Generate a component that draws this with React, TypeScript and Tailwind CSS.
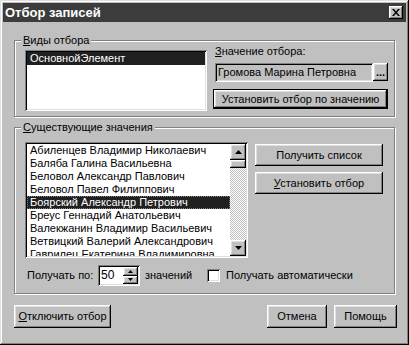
import React from 'react';

const raised =
  'bg-[#c0c0c0] shadow-[inset_-1px_-1px_#000,inset_1px_1px_#fff,inset_-2px_-2px_#808080,inset_2px_2px_#dfdfdf]';
const sunken =
  'shadow-[inset_1px_1px_#808080,inset_-1px_-1px_#fff,inset_2px_2px_#000,inset_-2px_-2px_#dfdfdf]';
const group =
  'relative border border-[#808080] shadow-[inset_1px_1px_#fff,1px_1px_#fff]';

const names = [
  'Абиленцев Владимир Николаевич',
  'Баляба Галина Васильевна',
  'Беловол Александр Павлович',
  'Беловол Павел Филиппович',
  'Боярский Александр Петрович',
  'Бреус Геннадий Анатольевич',
  'Валекжанин Владимир Васильевич',
  'Ветвицкий Валерий Александрович',
  'Гаврилец Екатерина Владимировна',
];

function Arrow({ up, small }: { up?: boolean; small?: boolean }) {
  const w = small ? 5 : 7;
  const h = small ? 3 : 4;
  return (
    <svg width={w} height={h} viewBox={`0 0 ${w} ${h}`}>
      <polygon
        points={up ? `0,${h} ${w},${h} ${w / 2},0` : `0,0 ${w},0 ${w / 2},${h}`}
        fill="#000"
      />
    </svg>
  );
}

function Button({ className = '', children }: { className?: string; children: React.ReactNode }) {
  return (
    <button type="button" className={`${raised} flex items-center justify-center leading-none ${className}`}>
      {children}
    </button>
  );
}

export default function App() {
  return (
    <div className="w-[409px] h-[345px] bg-[#c0c0c0] p-[3px] flex flex-col shadow-[inset_-1px_-1px_#000,inset_1px_1px_#dfdfdf,inset_-2px_-2px_#808080,inset_2px_2px_#fff] font-['Liberation_Sans',Arial,sans-serif] text-[11px] text-black select-none">
      {/* title bar */}
      <div className="h-[19px] bg-[#3c3c3c] flex items-center justify-between pl-[2px] pr-[3px]">
        <span className="text-white font-bold text-[13px] leading-none">Отбор записей</span>
        <button type="button" className={`${raised} w-[14px] h-[13px] flex items-center justify-center`}>
          <svg width="8" height="7" viewBox="0 0 8 7">
            <path d="M0 0h2l2 2.5L6 0h2L5 3.5 8 7H6L4 4.5 2 7H0l3-3.5z" fill="#000" />
          </svg>
        </button>
      </div>

      {/* Виды отбора */}
      <div className={`${group} mt-[18px] ml-[11px] w-[381px] h-[77px] flex pl-[10px] pt-[3px]`}>
        <span className="absolute -top-[8px] left-[6px] px-[2px] bg-[#c0c0c0] leading-[14px]">
          <u>В</u>иды отбора
        </span>
        <div className={`${sunken} mt-[6px] w-[182px] h-[61px] bg-white p-[2px]`}>
          <div className="h-[13px] leading-[13px] bg-[#202020] text-white pl-[3px]">ОсновнойЭлемент</div>
        </div>
        <div className="ml-[6px] w-[175px] flex flex-col">
          <div className="leading-[14px] pl-[2px]">
            <u>З</u>начение отбора:
          </div>
          <div className="mt-[5px] ml-[2px] flex h-[19px]">
            <div className={`${sunken} w-[158px] bg-[#c0c0c0] pl-[3px] leading-[19px]`}>Громова Марина Петровна</div>
            <Button className="w-[15px] h-[18px] items-end pb-[3px] font-bold text-[11px]">...</Button>
          </div>
          <button
            type="button"
            className="mt-[7px] h-[20px] border border-black bg-[#c0c0c0] shadow-[inset_-1px_-1px_#000,inset_1px_1px_#fff,inset_-2px_-2px_#808080,inset_2px_2px_#dfdfdf] flex items-center justify-center leading-none"
          >
            Установить отбор по значению
          </button>
        </div>
      </div>

      {/* Существующие значения */}
      <div className={`${group} mt-[10px] ml-[11px] w-[381px] h-[167px] pl-[10px] pt-[14px]`}>
        <span className="absolute -top-[8px] left-[6px] px-[2px] bg-[#c0c0c0] leading-[14px]">
          <u>С</u>уществующие значения
        </span>
        <div className="flex">
          <div className={`${sunken} w-[223px] h-[116px] bg-white p-[2px] flex`}>
            <div className="flex-1 overflow-hidden">
              {names.map((n, i) => (
                <div
                  key={n}
                  className={`h-[13px] leading-[13px] pl-[3px] whitespace-nowrap ${
                    i === 4 ? 'bg-[#202020] text-white outline outline-1 outline-dotted outline-[#808080] -outline-offset-1' : ''
                  }`}
                >
                  {n}
                </div>
              ))}
            </div>
            <div className="w-[16px] flex flex-col">
              <Button className="h-[16px]">
                <Arrow up />
              </Button>
              <div className="flex-1 flex flex-col bg-[repeating-conic-gradient(#fff_0_25%,#c0c0c0_0_50%)] bg-[length:2px_2px]">
                <div className={`${raised} h-[8px]`} />
              </div>
              <Button className="h-[16px]">
                <Arrow />
              </Button>
            </div>
          </div>
          <div className="ml-[7px] pt-[2px] flex flex-col gap-[6px]">
            <Button className="w-[128px] h-[22px]">Получить список</Button>
            <Button className="w-[128px] h-[22px]">
              <span>
                <u>У</u>становить отбор
              </span>
            </Button>
          </div>
        </div>
        <div className="mt-[7px] flex items-center h-[21px] whitespace-nowrap">
          <span className="ml-[2px] w-[71px] shrink-0">Получать по:</span>
          <div className={`${sunken} w-[42px] h-[21px] bg-white flex p-[2px] shrink-0`}>
            <span className="flex-1 pl-[1px] leading-[17px] text-[12px]">50</span>
            <div className="w-[15px] flex flex-col">
              <Button className="flex-1">
                <Arrow up small />
              </Button>
              <Button className="flex-1">
                <Arrow small />
              </Button>
            </div>
          </div>
          <span className="ml-[5px] w-[62px] shrink-0">значений</span>
          <div className={`${sunken} w-[13px] h-[13px] bg-white shrink-0`} />
          <span className="ml-[6px]">Получать автоматически</span>
        </div>
      </div>

      {/* bottom buttons */}
      <div className="mt-[11px] ml-[11px] mr-[9px] flex h-[23px]">
        <Button className="w-[97px]">
          <span>
            <u>О</u>тключить отбор
          </span>
        </Button>
        <Button className="ml-auto w-[60px]">Отмена</Button>
        <Button className="ml-[7px] w-[63px]">Помощь</Button>
      </div>
    </div>
  );
}
